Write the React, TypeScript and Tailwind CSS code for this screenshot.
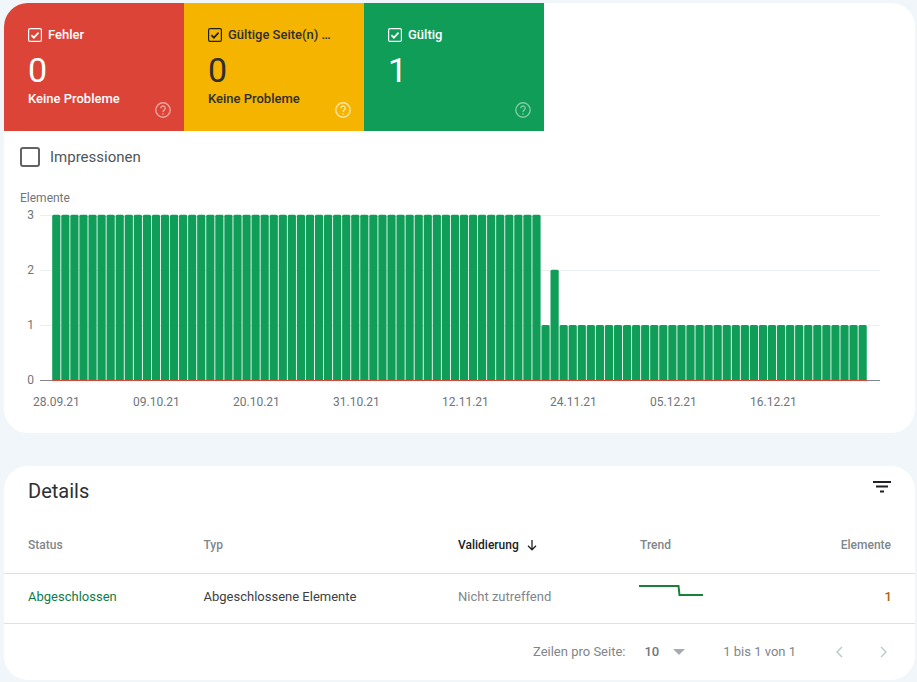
const FONT = "font-['Roboto',sans-serif]";

function Check({ dark }: { dark?: boolean }) {
  const c = dark ? "#202124" : "#ffffff";
  return (
    <svg width="14" height="14" viewBox="0 0 14 14" className="shrink-0">
      <rect x="0.6" y="0.6" width="12.8" height="12.8" rx="1.5" fill="none" stroke={c} strokeWidth="1.2" />
      <path d="M3.4 7.2 L5.9 9.7 L10.6 4.6" fill="none" stroke={c} strokeWidth="1.7" />
    </svg>
  );
}

function Help({ color }: { color: string }) {
  return (
    <svg width="16" height="16" viewBox="0 0 16 16" className="absolute left-[151px] top-[99px]">
      <circle cx="8" cy="8" r="7.2" fill="none" stroke={color} strokeWidth="1.4" />
      <path d="M5.8 6.2 A2.2 2.2 0 1 1 9.4 7.9 C8.4 8.6 8 9 8 10" fill="none" stroke={color} strokeWidth="1.4" />
      <circle cx="8" cy="11.9" r="0.8" fill={color} />
    </svg>
  );
}

function Tile({ bg, label, value, sub, dark, help }: { bg: string; label: string; value: string; sub?: string; dark?: boolean; help: string }) {
  return (
    <div className={`relative w-[180px] h-[128px] pl-[24px] pt-[25px] ${bg} ${dark ? "text-[#2d2f33]" : "text-white"}`}>
      <div className="flex items-center gap-[6px] h-[14px]">
        <Check dark={dark} />
        <span className="text-[13px] font-medium leading-[14px]">{label}</span>
      </div>
      <div className="text-[34px] leading-[38px] mt-[9px]">{value}</div>
      {sub && <div className="text-[13px] font-medium leading-[16px] mt-[2px]">{sub}</div>}
      <Help color={help} />
    </div>
  );
}

function Chart() {
  const bars: number[] = [];
  for (let i = 0; i < 54; i++) bars.push(3);
  bars.push(1, 2);
  for (let i = 0; i < 34; i++) bars.push(1);
  const y0 = 176;
  const unit = 55.1;
  const grid = [
    { v: 3, y: 11 },
    { v: 2, y: 66 },
    { v: 1, y: 121 },
  ];
  const dates = [
    ["28.09.21", 33],
    ["09.10.21", 133],
    ["20.10.21", 233],
    ["31.10.21", 333],
    ["12.11.21", 442],
    ["24.11.21", 550],
    ["05.12.21", 650],
    ["16.12.21", 750],
  ] as const;
  return (
    <svg width="913" height="221" viewBox="0 0 913 221" className="block">
      {grid.map((g) => (
        <line key={g.v} x1="36" x2="876" y1={g.y + 0.5} y2={g.y + 0.5} stroke="#eceff1" strokeWidth="1" />
      ))}
      <line x1="36" x2="876" y1={y0 + 0.5} y2={y0 + 0.5} stroke="#80868b" strokeWidth="1" />
      {bars.map((v, i) => {
        const x = 48.2 + i * 9.06;
        const h = v * unit;
        const top = y0 - h;
        return (
          <path
            key={i}
            d={`M${x} ${y0} V${top + 1.5} Q${x} ${top} ${x + 1.5} ${top} H${x + 6.7} Q${x + 8.2} ${top} ${x + 8.2} ${top + 1.5} V${y0} Z`}
            fill="#0f9d58"
          />
        );
      })}
      <line x1="48" x2="863" y1={y0 + 0.5} y2={y0 + 0.5} stroke="#db4437" strokeWidth="1.2" />
      {[...grid, { v: 0, y: y0 }].map((g) => (
        <text key={g.v} x="30" y={g.y + 4} textAnchor="end" fontSize="12" fill="#70757a" fontFamily="Roboto, sans-serif">
          {g.v}
        </text>
      ))}
      {dates.map(([d, x]) => (
        <text key={d} x={x - 4} y={y0 + 26} fontSize="12" fill="#70757a" fontFamily="Roboto, sans-serif">
          {d}
        </text>
      ))}
    </svg>
  );
}

export default function App() {
  return (
    <div className={`${FONT} w-[917px] h-[682px] overflow-hidden bg-[#f1f6fa] pl-[4px] pr-[2px] pt-[3px]`}>
      <section className="h-[430px] bg-white rounded-[24px] overflow-hidden">
        <div className="flex">
          <Tile bg="bg-[#db4437]" label="Fehler" value="0" sub="Keine Probleme" help="#eda69f" />
          <Tile bg="bg-[#f4b400]" label="Gültige Seite(n) …" value="0" sub="Keine Probleme" dark help="#fbe6a6" />
          <Tile bg="bg-[#0f9d58]" label="Gültig" value="1" help="#7fcaa6" />
        </div>
        <div className="flex items-center h-[20px] mt-[16px] pl-[16px]">
          <div className="w-[20px] h-[20px] rounded-[3px] border-2 border-[#5f6368]" />
          <span className="ml-[10px] text-[15px] leading-[20px] text-[#50555a]">Impressionen</span>
        </div>
        <div className="mt-[24px] pl-[16px] h-[14px] text-[12px] leading-[14px] text-[#70757a]">Elemente</div>
        <div className="-mt-[1px]">
          <Chart />
        </div>
      </section>

      <section className="mt-[33px] h-[214px] bg-white rounded-[24px] overflow-hidden text-[12px]">
        <div className="flex items-start justify-between h-[52px] pl-[24px] pr-[24px]">
          <h2 className="text-[20px] font-normal leading-[24px] text-[#2d2f33] mt-[13px]">Details</h2>
          <svg width="18" height="12" viewBox="0 0 18 12" className="mt-[15px]">
            <rect x="0" y="0" width="18" height="2" fill="#202124" />
            <rect x="3" y="4.5" width="12" height="2" fill="#202124" />
            <rect x="7" y="9.5" width="4" height="2" fill="#202124" />
          </svg>
        </div>
        <div className="flex items-center h-[56px] pb-[2px] border-b border-[#e0e0e0] pl-[24px] pr-[24px] text-[#80868b] font-medium">
          <div className="w-[175.5px]">Status</div>
          <div className="w-[254.5px]">Typ</div>
          <div className="w-[182px] flex items-center gap-[7px] text-[#202124]">
            Validierung
            <svg width="12" height="12" viewBox="0 0 12 12">
              <path d="M6 1 V10.5 M2 6.8 L6 10.8 L10 6.8" fill="none" stroke="#202124" strokeWidth="1.3" />
            </svg>
          </div>
          <div className="w-[119px]">Trend</div>
          <div className="flex-1 text-right">Elemente</div>
        </div>
        <div className="flex items-center h-[50px] pb-[4px] border-b border-[#e0e0e0] pl-[24px] pr-[24px] text-[13px]">
          <div className="w-[175.5px] text-[#0f7b4a]">Abgeschlossen</div>
          <div className="w-[254.5px] text-[#3c4043]">Abgeschlossene Elemente</div>
          <div className="w-[181.5px] text-[#80868b]">Nicht zutreffend</div>
          <div className="w-[119px] h-[50px] -ml-[1px]">
            <svg width="66" height="50" viewBox="0 0 66 50" className="block">
              <path d="M0 14 H39.5 L40.5 23 H64" fill="none" stroke="#188038" strokeWidth="2" />
            </svg>
          </div>
          <div className="flex-1 text-right font-medium text-[#b06000] -mr-[1px]">1</div>
        </div>
        <div className="flex items-center h-[55px] text-[13px] text-[#80868b] pl-[529px]">
          <span>Zeilen pro Seite:</span>
          <span className="ml-[19px] font-medium text-[#70757a]">10</span>
          <svg width="12" height="6" viewBox="0 0 12 6" className="ml-[14px]">
            <path d="M0 0 H12 L6 6 Z" fill="#a8acb0" />
          </svg>
          <span className="ml-[38px]">1 bis 1 von 1</span>
          <svg width="10" height="12" viewBox="0 0 10 12" className="ml-[38px]">
            <path d="M8 1 L3 6 L8 11" fill="none" stroke="#b5cdc6" strokeWidth="1.4" />
          </svg>
          <svg width="10" height="12" viewBox="0 0 10 12" className="ml-[35px]">
            <path d="M2 1 L7 6 L2 11" fill="none" stroke="#b5cdc6" strokeWidth="1.4" />
          </svg>
        </div>
      </section>
    </div>
  );
}
